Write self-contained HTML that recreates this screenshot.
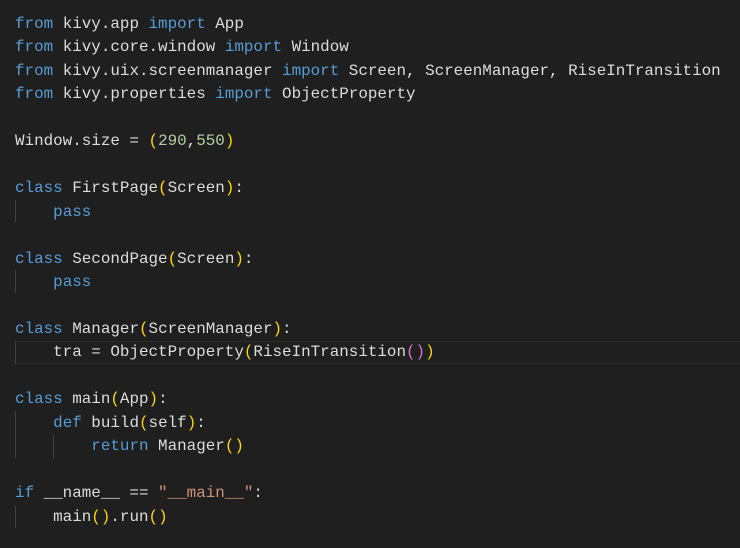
<!DOCTYPE html>
<html><head><meta charset="utf-8"><style>
html,body{margin:0;padding:0;background:#1f1f1f;width:740px;height:548px;overflow:hidden}
.code{position:absolute;left:15px;top:13px;font-family:"Liberation Mono",monospace;font-size:15.9px;line-height:23.45px;color:#dcdcdc;white-space:pre}
.k{color:#569cd6}.n{color:#b5cea8}.s{color:#ce9178}.y{color:#ffd700}.p{color:#da70d6}
.g{position:absolute;width:1px;background:#404040}
.cur{position:absolute;left:15px;top:341px;width:725px;height:21px;border-top:1px solid #2c2c2c;border-bottom:1px solid #2c2c2c}
</style></head><body>
<div class="cur"></div>
<div class="g" style="left:15px;top:200px;height:23px"></div>
<div class="g" style="left:15px;top:270px;height:23px"></div>
<div class="g" style="left:15px;top:341px;height:23px"></div>
<div class="g" style="left:15px;top:411px;height:47px"></div>
<div class="g" style="left:53px;top:435px;height:23px"></div>
<div class="g" style="left:15px;top:505px;height:23px"></div>
<div class="code"><span class="k">from</span> kivy.app <span class="k">import</span> App
<span class="k">from</span> kivy.core.window <span class="k">import</span> Window
<span class="k">from</span> kivy.uix.screenmanager <span class="k">import</span> Screen, ScreenManager, RiseInTransition
<span class="k">from</span> kivy.properties <span class="k">import</span> ObjectProperty

Window.size = <span class="y">(</span><span class="n">290</span>,<span class="n">550</span><span class="y">)</span>

<span class="k">class</span> FirstPage<span class="y">(</span>Screen<span class="y">)</span>:
    <span class="k">pass</span>

<span class="k">class</span> SecondPage<span class="y">(</span>Screen<span class="y">)</span>:
    <span class="k">pass</span>

<span class="k">class</span> Manager<span class="y">(</span>ScreenManager<span class="y">)</span>:
    tra = ObjectProperty<span class="y">(</span>RiseInTransition<span class="p">()</span><span class="y">)</span>

<span class="k">class</span> main<span class="y">(</span>App<span class="y">)</span>:
    <span class="k">def</span> build<span class="y">(</span>self<span class="y">)</span>:
        <span class="k">return</span> Manager<span class="y">()</span>

<span class="k">if</span> __name__ == <span class="s">"__main__"</span>:
    main<span class="y">()</span>.run<span class="y">()</span></div>
</body></html>
